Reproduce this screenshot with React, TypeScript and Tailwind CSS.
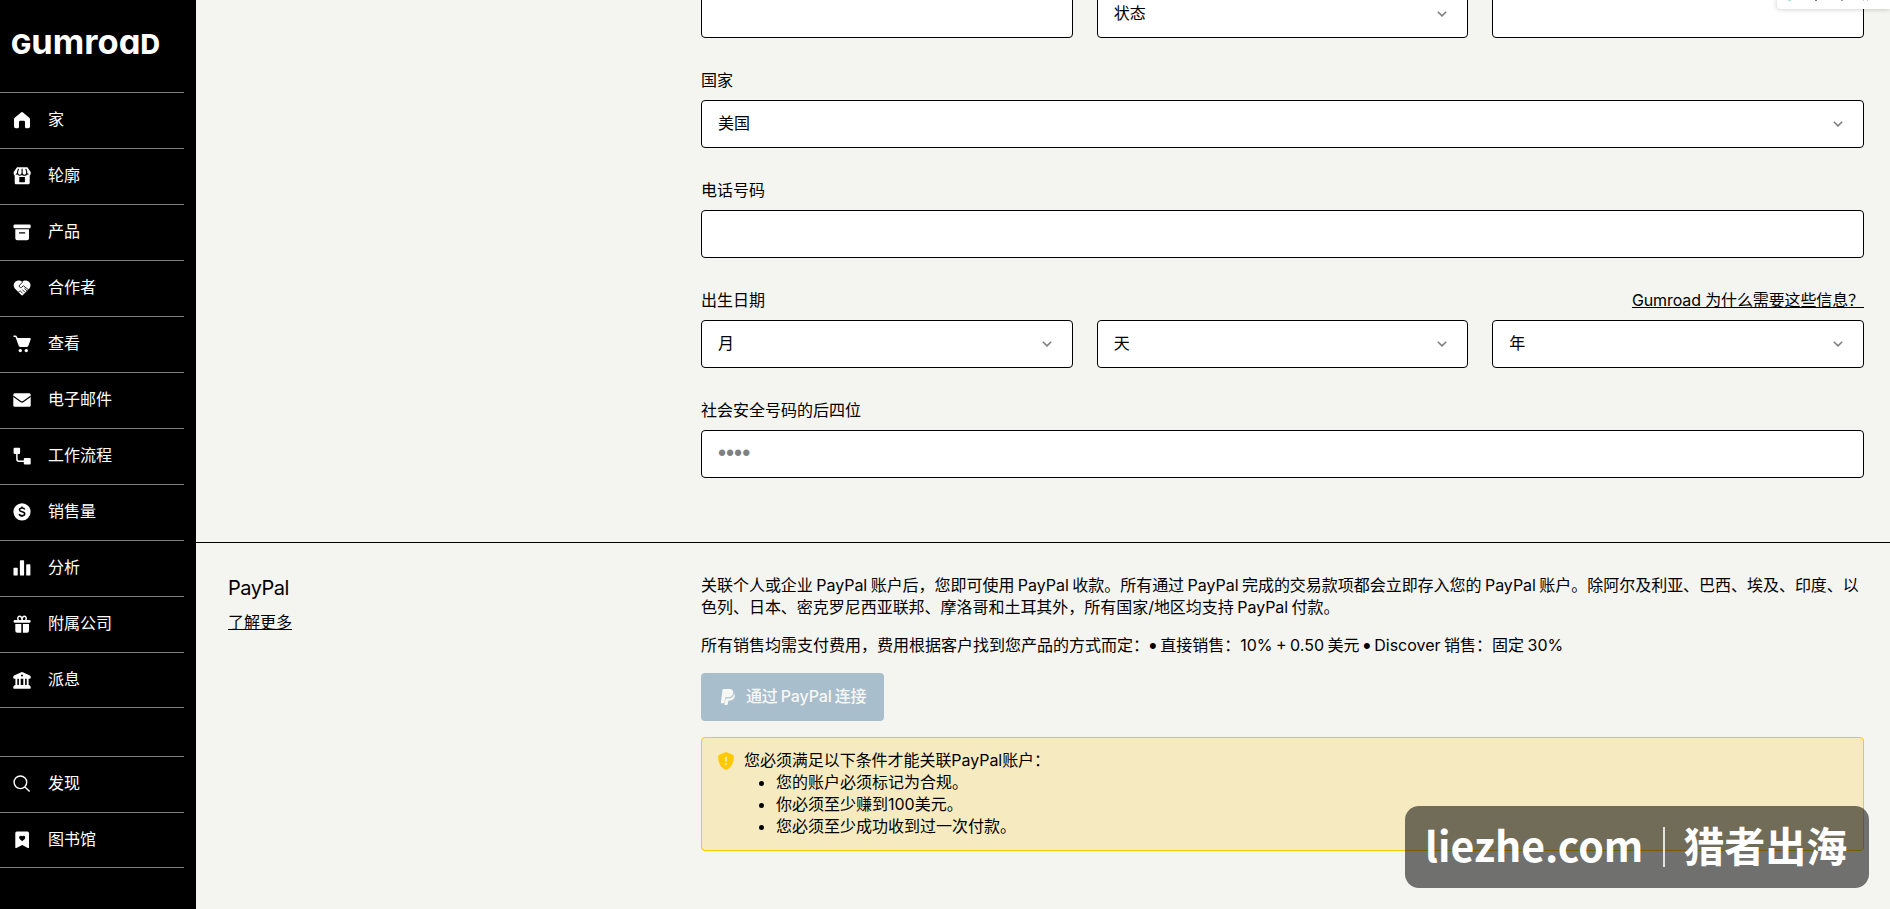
import React from "react";

const Icon = ({ children }: { children: React.ReactNode }) => (
  <svg viewBox="0 0 20 20" className="h-5 w-5 shrink-0" fill="currentColor">
    {children}
  </svg>
);

const HomeIcon = () => (
  <Icon>
    <path d="M9 2.4a1.5 1.5 0 0 1 2 0l6.3 5.4a2 2 0 0 1 .7 1.5v7.2a1.8 1.8 0 0 1-1.8 1.8h-1.6a1.6 1.6 0 0 1-1.6-1.6V12a1.2 1.2 0 0 0-1.2-1.2H8.2A1.2 1.2 0 0 0 7 12v4.7a1.6 1.6 0 0 1-1.6 1.6H3.8A1.8 1.8 0 0 1 2 16.500V9.300a2 2 0 0 1 .7-1.500z" />
  </Icon>
);

const StoreIcon = () => (
  <Icon>
    <path
      fillRule="evenodd"
      d="M5 1.300h10.400L18.700 6v1.500c0 .9-.3 1.500-1 2v7.200c0 .9-.7 1.600-1.600 1.600H4.300c-.9 0-1.600-.7-1.600-1.600V9.500c-.7-.5-1-1.100-1-2V6zM7.300 11v5.300h5.600V11z"
    />
    <path
      d="M6.500 2.800 5.600 5.500v1.600a1.200 1.200 0 0 1-1.800.8M10.100 2.800v4.400M13.800 2.800l.9 2.700v1.600a1.200 1.200 0 0 0 1.800.8M5.600 7a2.200 2.200 0 0 0 4.500 0 2.200 2.200 0 0 0 4.600 0"
      fill="none"
      stroke="#000"
      strokeWidth="1.100"
    />
  </Icon>
);

const ProductIcon = () => (
  <Icon>
    <rect x="1.500" y="2.600" width="17.200" height="3.700" rx="1.200" />
    <path
      fillRule="evenodd"
      d="M3.300 7.200H17v9.100a2 2 0 0 1-2 2H5.300a2 2 0 0 1-2-2zM7.600 10.200a.7.7 0 0 0 0 1.400h5a.7.7 0 0 0 0-1.400z"
    />
  </Icon>
);

const DealIcon = () => (
  <Icon>
    <path d="M10.100 4C8 2 5 2.200 3.100 4.100s-1.900 4.800-.1 6.700l6.300 6.200c.5.500 1.100.500 1.600 0l6.300-6.200c1.800-1.900 1.800-4.800-.1-6.700S12.200 2 10.100 4z" />
    <path
      d="m10.800 4-3.300 3.200a1.500 1.500 0 0 0 2.100 2.100l1.800-1.500 5.400 4.200M12.400 10.300l2.900 2.900M10.300 11.600l2.700 2.700M8.400 13l2.300 2.400M6.600 14.100l1.500-1.500"
      fill="none"
      stroke="#000"
      strokeWidth=".85"
    />
  </Icon>
);

const CartIcon = () => (
  <Icon>
    <path d="M1.500 1.500h2c.6 0 1.100.3 1.300.9l.8 1.700h12.200c.7 0 1.100.6.9 1.200l-2.300 6.500c-.2.700-.8 1.100-1.500 1.100H8.200c-.7 0-1.300-.4-1.500-1.100L3.500 3.100h-2z" />
    <circle cx="8.300" cy="16.600" r="1.700" />
    <circle cx="14.300" cy="16.600" r="1.700" />
  </Icon>
);

const EmailIcon = () => (
  <Icon>
    <rect x="1.300" y="3.300" width="17.400" height="13.400" rx="1.500" />
    <path d="m1.300 6.300 7.700 5.400c.6.400 1.400.400 2 0l7.700-5.400" fill="none" stroke="#000" strokeWidth="1.300" />
  </Icon>
);

const WorkflowIcon = () => (
  <Icon>
    <rect x="1.600" y="1.700" width="6.500" height="6.200" rx="1" />
    <rect x="11.800" y="12" width="6.900" height="6.500" rx="1" />
    <path d="M4.900 7v6.300A1.900 1.900 0 0 0 6.800 15.200H12" fill="none" stroke="currentColor" strokeWidth="1.500" />
  </Icon>
);

const SalesIcon = () => (
  <Icon>
    <circle cx="10" cy="9.800" r="8.600" />
    <path
      d="M12.700 7.500C12.400 6.400 11.400 6 10 6S7.500 6.600 7.500 7.800c0 2.700 5.200 1.200 5.200 4 0 1.300-1.200 1.900-2.700 1.900s-2.600-.6-2.800-1.700M10 4.600V6M10 13.700v1.400"
      fill="none"
      stroke="#000"
      strokeWidth="1.500"
    />
  </Icon>
);

const AnalyticsIcon = () => (
  <Icon>
    <rect x="1.500" y="9.700" width="4.200" height="7.900" rx=".7" />
    <rect x="7.900" y="2.300" width="4.200" height="15.300" rx=".7" />
    <rect x="14.200" y="6.300" width="4.200" height="11.300" rx=".7" />
  </Icon>
);

const GiftIcon = () => (
  <Icon>
    <path
      d="M10 6.300c0-2.300-.8-4-2.500-4S5.300 4.600 6.300 6.300M10 6.300c0-2.300.8-4 2.500-4s2.200 2.300 1.200 4"
      fill="none"
      stroke="currentColor"
      strokeWidth="1.500"
    />
    <rect x="1.600" y="5.900" width="17" height="2.900" rx="1.200" />
    <path d="M3.300 10h6v8.700h-4a2 2 0 0 1-2-2zM10.900 10H17v6.700a2 2 0 0 1-2 2h-4.100z" />
  </Icon>
);

const BankIcon = () => (
  <Icon>
    <path
      fillRule="evenodd"
      d="M9.300 2.200a1.500 1.500 0 0 1 1.400 0l7.200 3.400c.5.200.8.6.8 1.100v1c0 .6-.5 1-1 1H2.300c-.5 0-1-.4-1-1v-1c0-.5.3-.9.8-1.100zM10 4.500a1 1 0 1 0 0 2 1 1 0 0 0 0-2z"
    />
    <path d="M3.400 8h1.900v7H3.400zM6.900 8h1.800v7H6.900zM11.300 8h1.800v7h-1.800zM14.700 8h1.900v7h-1.900z" />
    <path d="M2.800 15h14.400l1.500 1.700v1c0 .6-.4 1-1 1H2.300c-.6 0-1-.4-1-1v-1z" />
  </Icon>
);

const SearchIcon = () => (
  <Icon>
    <path
      d="M8.400 2a6.300 6.300 0 1 0 0 12.600 6.300 6.300 0 0 0 0-12.600zM12.900 12.900l4.700 4.700"
      fill="none"
      stroke="currentColor"
      strokeWidth="1.400"
    />
  </Icon>
);

const LibraryIcon = () => (
  <Icon>
    <path
      fillRule="evenodd"
      d="M5 1.600h10.400A1.600 1.600 0 0 1 17 3.200v14.200c0 .6-.6.9-1.100.6L10.200 15l-5.800 3c-.5.300-1.100 0-1.100-.6V3.200A1.600 1.600 0 0 1 5 1.600zM10.200 6.300C9 5 6.900 5.900 7.200 7.800c.2 1.300 1.500 2.100 3 3.500 1.500-1.400 2.800-2.200 3-3.500.3-1.900-1.800-2.800-3-1.500z"
    />
  </Icon>
);

const PaypalIcon = () => (
  <svg viewBox="0 0 16 18" className="h-[18px] w-4 shrink-0" fill="currentColor">
    <path d="M3.300 1h6.200c2.600 0 4.100 1.300 3.700 3.900-.5 3.100-2.500 4.400-5.300 4.400H6.100c-.5 0-.8.3-.9.800l-.9 5.100H1.400c-.4 0-.6-.3-.500-.6L2.500 1.700C2.600 1.300 2.900 1 3.300 1z" />
    <path d="M14 5.400c.7.700.9 1.700.7 3-.5 2.800-2.300 4-4.900 4h-.7c-.4 0-.7.200-.8.700l-.6 3.500c-.1.300-.3.500-.6.500H4.900c-.3 0-.5-.3-.4-.6l1.100-6.100h2.600c3.100 0 5.200-1.700 5.800-5z" />
  </svg>
);

const ShieldIcon = () => (
  <svg viewBox="0 0 18 20" className="mt-px h-5 w-[18px] shrink-0">
    <path
      d="M8.300 1.200a1.700 1.700 0 0 1 1.400 0l6.100 2.600c.6.300 1 .8 1 1.500.1 5.200-1.400 10.600-7.100 13.500-.5.200-.9.200-1.400 0C2.600 15.900 1.100 10.500 1.200 5.300c0-.7.4-1.200 1-1.500z"
      fill="#ffc900"
    />
    <path d="M9 5.800v4.700M9 12.300v1.800" stroke="#f6ebc0" strokeWidth="1.700" />
  </svg>
);

const mainLinks = [
  { label: "家", icon: HomeIcon },
  { label: "轮廓", icon: StoreIcon },
  { label: "产品", icon: ProductIcon },
  { label: "合作者", icon: DealIcon },
  { label: "查看", icon: CartIcon },
  { label: "电子邮件", icon: EmailIcon },
  { label: "工作流程", icon: WorkflowIcon },
  { label: "销售量", icon: SalesIcon },
  { label: "分析", icon: AnalyticsIcon },
  { label: "附属公司", icon: GiftIcon },
  { label: "派息", icon: BankIcon },
];

const otherLinks = [
  { label: "发现", icon: SearchIcon },
  { label: "图书馆", icon: LibraryIcon },
];

const NavGroup = ({ links }: { links: typeof mainLinks }) => (
  <div className="w-[184px]">
    {links.map(({ label, icon: LinkIcon }) => (
      <a
        key={label}
        className="flex h-14 items-center gap-4 border-t border-[#808080] pb-px pl-3 last:border-b last:pb-0"
      >
        <LinkIcon />
        <span className="pb-0.5">{label}</span>
      </a>
    ))}
  </div>
);

const Logo = () => (
  <div className="flex h-[92px] items-baseline pl-[11px] pt-[22px] leading-[40px]">
    <span className="text-[27px] font-extrabold">G</span>
    <span className="text-[34.500px] font-bold [font-feature-settings:'cv11']">umroa</span>
    <span className="text-[27px] font-extrabold">D</span>
  </div>
);

const Chevron = () => (
  <svg viewBox="0 0 10 6" className="h-1.5 w-2.5" fill="none" stroke="#808080" strokeWidth="1.600">
    <path d="M.8.700 5 4.900 9.200.7" />
  </svg>
);

const Box = ({ children }: { children?: React.ReactNode }) => (
  <div className="flex h-12 items-center rounded border border-black bg-white px-4">{children}</div>
);

const Select = ({ value }: { value: string }) => (
  <div className="flex h-12 items-center justify-between rounded border border-black bg-white pl-4 pr-5">
    <span className="pb-0.5">{value}</span>
    <Chevron />
  </div>
);

const Field = ({
  label,
  link,
  children,
}: {
  label: string;
  link?: string;
  children: React.ReactNode;
}) => (
  <div className="flex flex-col gap-2">
    <div className="flex h-[22px] justify-between leading-5">
      <span>{label}</span>
      {link && <a className="whitespace-pre tracking-[-0.12px] underline [word-spacing:0px]">{link}</a>}
    </div>
    {children}
  </div>
);

const Dot = () => <span className="align-[-2px] font-['Liberation_Sans',sans-serif] text-[22px] leading-none">•</span>;

const App = () => {
  return (
    <div className="relative flex h-[909px] w-[1890px] overflow-hidden bg-[#f4f4f0] font-['Inter','Noto_Sans_CJK_SC',sans-serif] text-base leading-[22px] text-black [word-spacing:-1px]">
      <nav className="w-[196px] shrink-0 bg-black text-white">
        <Logo />
        <NavGroup links={mainLinks} />
        <div className="mt-12">
          <NavGroup links={otherLinks} />
        </div>
      </nav>

      <main className="min-w-0 flex-1">
        <section className="flex h-[542px] flex-col justify-end pb-16 pl-[505px] pr-[26px]">
          <div className="flex flex-col gap-8">
            <div className="grid grid-cols-3 gap-6">
              <Box />
              <Select value="状态" />
              <Box />
            </div>
            <Field label="国家">
              <Select value="美国" />
            </Field>
            <Field label="电话号码">
              <Box />
            </Field>
            <Field label="出生日期" link="Gumroad 为什么需要这些信息？">
              <div className="grid grid-cols-3 gap-6">
                <Select value="月" />
                <Select value="天" />
                <Select value="年" />
              </div>
            </Field>
            <Field label="社会安全号码的后四位">
              <Box>
                <span className="pb-0.5 font-['Liberation_Sans',sans-serif] text-[23px] leading-none text-[#808080]">
                  ••••
                </span>
              </Box>
            </Field>
          </div>
        </section>

        <section className="flex border-t border-black py-8 pl-8 pr-[26px]">
          <header className="w-[473px] shrink-0">
            <h2 className="-mt-px text-xl leading-7 tracking-[-0.5px]">PayPal</h2>
            <a className="mt-[9px] inline-block underline">了解更多</a>
          </header>
          <div className="flex min-w-0 flex-1 flex-col gap-4">
            <p className="-mt-px mb-px whitespace-nowrap tracking-[-0.03px]">
              关联个人或企业 PayPal 账户后，您即可使用 PayPal 收款。所有通过 PayPal 完成的交易款项都会立即存入您的 PayPal 账户。除阿尔及利亚、巴西、埃及、印度、以
              <br />
              色列、日本、密克罗尼西亚联邦、摩洛哥和土耳其外，所有国家/地区均支持 PayPal 付款。
            </p>
            <p className="-mt-px mb-px h-[22px]">
              所有销售均需支付费用，费用根据客户找到您产品的方式而定：
              <Dot /> 直接销售：10% + 0.50 美元 <Dot /> Discover 销售：固定 30%
            </p>
            <button className="flex h-12 w-[183px] items-center gap-2.5 whitespace-nowrap rounded bg-[#00457c] pl-[19px] font-medium text-white opacity-30">
              <PaypalIcon />
              <span className="pb-0.5 tracking-[-0.15px] [word-spacing:-1px]">通过 PayPal 连接</span>
            </button>
            <div className="flex gap-2 rounded border border-[#ffc900] bg-[#ffc900]/20 py-3 pl-[15px] pr-3">
              <ShieldIcon />
              <div className="-mt-px mb-px pl-px">
                <p className="tracking-[-0.05px]">您必须满足以下条件才能关联PayPal账户：</p>
                <ul className="list-disc pl-8">
                  <li>您的账户必须标记为合规。</li>
                  <li>你必须至少赚到100美元。</li>
                  <li>您必须至少成功收到过一次付款。</li>
                </ul>
              </div>
            </div>
          </div>
        </section>
      </main>

      {/* bottom edge of the toolbar that hangs over the page */}
      <div className="absolute right-0 top-0 flex h-[9px] w-[113px] rounded-bl bg-white pl-[11px] shadow-[0_0_5px_rgba(0,0,0,0.25)]">
        <span className="h-px w-[3px] bg-[#a8ecd6]" />
        <span className="ml-6 h-px w-0.5 bg-[#777]" />
        <span className="ml-6 h-px w-0.5 bg-[#999]" />
        <span className="ml-5 h-px w-px bg-[#ccc]" />
        <span className="ml-[3px] h-px w-px bg-[#ccc]" />
      </div>

      <div className="absolute bottom-[21px] right-[21px] flex h-[82px] w-[464px] items-center rounded-[14px] bg-black/54 pl-5 text-[41px] font-bold leading-none text-white font-['Noto_Sans_CJK_SC',sans-serif]">
        <span className="pb-[5px]">liezhe.com</span>
        <span className="ml-5 mr-[18px] h-10 w-0.5 bg-white/80" />
        <span className="pb-[5px]">猎者出海</span>
      </div>
    </div>
  );
};

export default App;
